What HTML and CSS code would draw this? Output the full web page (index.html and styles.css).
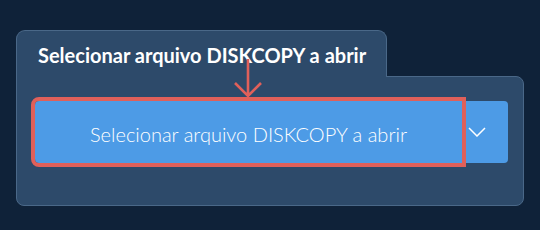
FILE: index.html
```html
<!DOCTYPE html>
<html>
<head>
<meta charset="utf-8">
<link rel="stylesheet" href="styles.css">
</head>
<body>
<div class="panel">
  <div class="tab">Selecionar arquivo DISKCOPY a abrir</div>
  <div class="body">
    <div class="split">
      <button class="main">Selecionar arquivo DISKCOPY a abrir</button>
      <button class="drop">
        <svg width="18" height="10" viewBox="0 0 18 10"><path d="M1 1 L9 9 L17 1" fill="none" stroke="#fff" stroke-width="1.5"/></svg>
      </button>
    </div>
  </div>
  <svg class="arrow" width="40" height="42" viewBox="0 0 40 42"><path d="M18 0 V37 M5 24 L18 37 L31 24" fill="none" stroke="#e0605a" stroke-width="2.6"/></svg>
</div>
</body>
</html>
```
FILE: styles.css
```css
html, body {
  margin: 0;
  padding: 0;
  background: #0f2239;
  width: 540px;
  height: 230px;
  overflow: hidden;
  font-family: Lato, "Open Sans", sans-serif;
}
.panel {
  position: relative;
  margin: 30px 0 0 16px;
  width: 508px;
}
.tab {
  position: relative;
  z-index: 2;
  box-sizing: border-box;
  width: 371px;
  height: 47px;
  margin-bottom: -1px;
  padding: 12px 0 0 21px;
  background: #2d4a6a;
  border: 1px solid #4a6888;
  border-bottom: none;
  border-radius: 9px 9px 0 0;
  color: #fff;
  font-weight: bold;
  font-size: 20px;
  line-height: 24px;
}
.body {
  position: relative;
  z-index: 1;
  box-sizing: border-box;
  height: 130px;
  background: #2d4a6a;
  border: 1px solid #4a6888;
  border-radius: 0 8px 8px 8px;
  padding: 24px 15px 0 18px;
}
.split {
  display: flex;
  height: 62px;
}
.split button {
  border: none;
  background: #4d9be6;
  color: #fff;
  font-family: Lato, "Open Sans", sans-serif;
  padding: 0;
  margin: 0;
}
.main {
  width: 427px;
  font-size: 20px;
  font-weight: 300;
  line-height: 24px;
  padding-top: 3px !important;
  border-radius: 4px 0 0 4px;
  outline: 4px solid #e0605a;
  position: relative;
  z-index: 1;
}
.drop {
  flex: 1;
  border-radius: 0 4px 4px 0;
  display: flex;
  align-items: center;
  justify-content: flex-start;
  padding-left: 6px !important;
}
.drop svg { display: block; }
.arrow {
  position: absolute;
  left: 214px;
  top: 29px;
  z-index: 3;
}
```
